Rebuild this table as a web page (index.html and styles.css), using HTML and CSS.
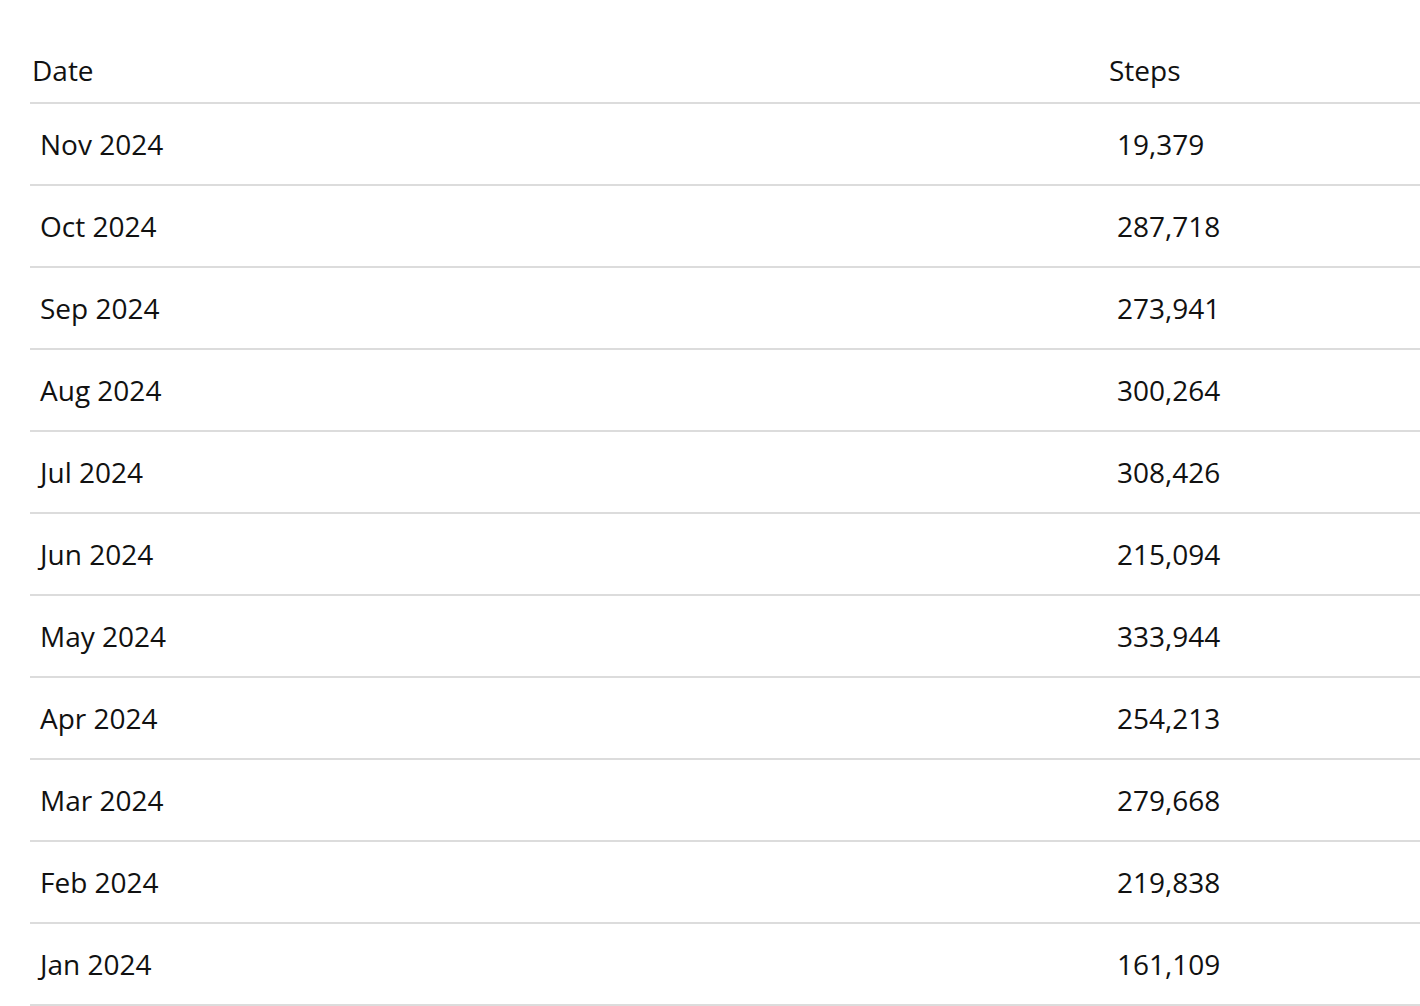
FILE: index.html
```html
<!DOCTYPE html>
<html lang="en">
<head>
<meta charset="utf-8">
<title>Steps</title>
<link rel="stylesheet" href="styles.css">
</head>
<body>
<div class="wrap">
  <table class="steps">
    <thead>
      <tr><th class="c-date">Date</th><th class="c-steps">Steps</th></tr>
    </thead>
    <tbody>
      <tr><td>Nov 2024</td><td>19,379</td></tr>
      <tr><td>Oct 2024</td><td>287,718</td></tr>
      <tr><td>Sep 2024</td><td>273,941</td></tr>
      <tr><td>Aug 2024</td><td>300,264</td></tr>
      <tr><td>Jul 2024</td><td>308,426</td></tr>
      <tr><td>Jun 2024</td><td>215,094</td></tr>
      <tr><td>May 2024</td><td>333,944</td></tr>
      <tr><td>Apr 2024</td><td>254,213</td></tr>
      <tr><td>Mar 2024</td><td>279,668</td></tr>
      <tr><td>Feb 2024</td><td>219,838</td></tr>
      <tr><td>Jan 2024</td><td>161,109</td></tr>
    </tbody>
  </table>
</div>
</body>
</html>
```
FILE: styles.css
```css
html, body {
  margin: 0;
  padding: 0;
  background: #fff;
}
body {
  font-family: "Open Sans", "Liberation Sans", sans-serif;
  color: #111;
  overflow: hidden;
}
.wrap {
  padding: 40px 0 0 30px;
}
.steps {
  width: 1390px;
  border-collapse: collapse;
  font-size: 28px;
}
.steps th {
  font-weight: 400;
  text-align: left;
  height: 60px;
  padding: 0 0 2px 2px;
  vertical-align: middle;
  border-bottom: 2px solid #dcdcdc;
}
.steps th.c-date {
  width: 1075px;
}
.steps td {
  height: 80px;
  padding: 0 0 0 10px;
  vertical-align: middle;
  border-bottom: 2px solid #dcdcdc;
  line-height: 38px;
}
```
